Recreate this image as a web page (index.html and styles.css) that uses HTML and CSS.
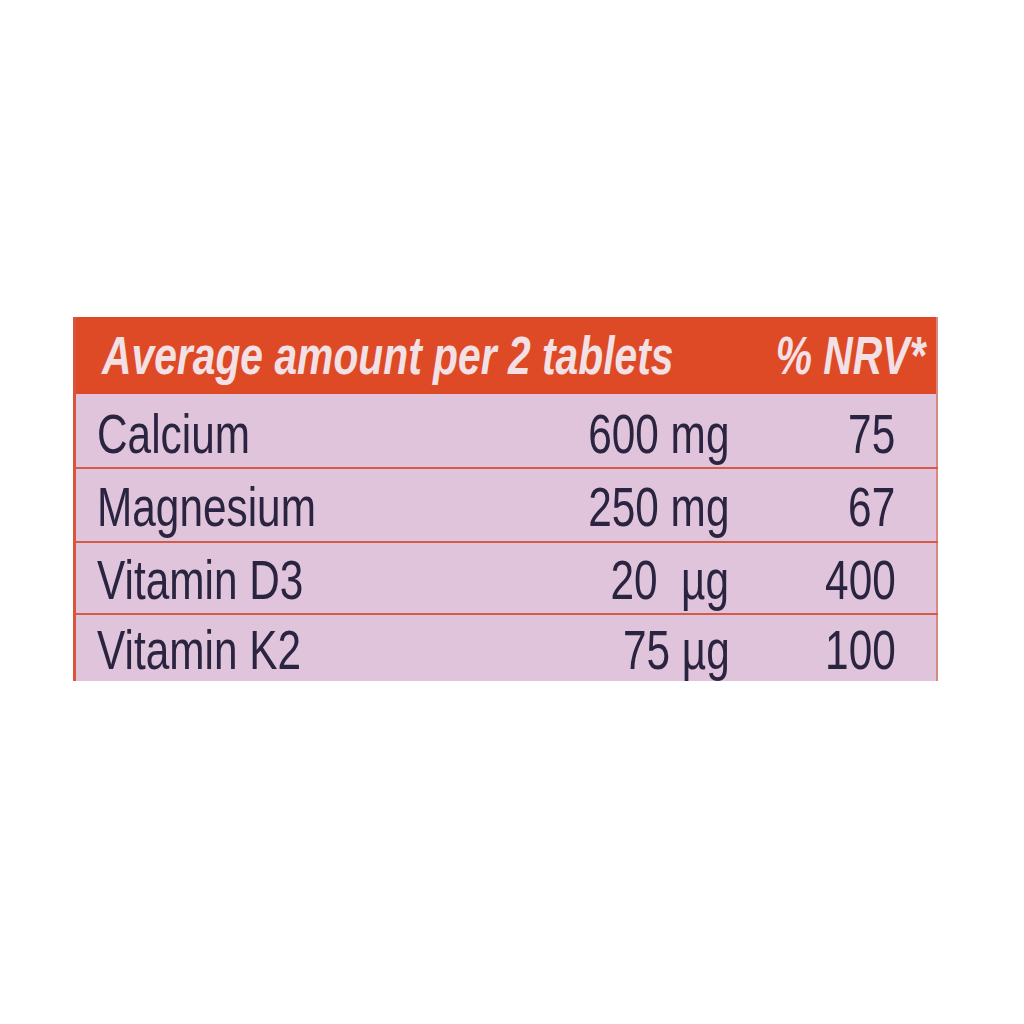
FILE: index.html
```html
<!DOCTYPE html>
<html>
<head>
    <title>Nutrition Information</title>
    <link rel="stylesheet" href="styles.css">
</head>
<body>
    <div class="label">
        <table class="nutri">
            <colgroup>
                <col class="c-name">
                <col class="c-amount">
                <col class="c-nrv">
            </colgroup>
            <thead>
                <tr>
                    <th class="name" colspan="2"><span class="sq">Average amount per 2 tablets</span></th>
                    <th class="nrv"><span class="sq">% NRV*</span></th>
                </tr>
            </thead>
            <tbody>
                <tr>
                    <td class="name"><span class="sq">Calcium</span></td>
                    <td class="amount"><span class="sq">600 mg</span></td>
                    <td class="nrv"><span class="sq">75</span></td>
                </tr>
                <tr>
                    <td class="name"><span class="sq">Magnesium</span></td>
                    <td class="amount"><span class="sq">250 mg</span></td>
                    <td class="nrv"><span class="sq">67</span></td>
                </tr>
                <tr>
                    <td class="name"><span class="sq">Vitamin D3</span></td>
                    <td class="amount"><span class="sq">20&nbsp;&nbsp;µg</span></td>
                    <td class="nrv"><span class="sq">400</span></td>
                </tr>
                <tr>
                    <td class="name"><span class="sq">Vitamin K2</span></td>
                    <td class="amount"><span class="sq">75 µg</span></td>
                    <td class="nrv"><span class="sq">100</span></td>
                </tr>
            </tbody>
        </table>
    </div>
</body>
</html>
```

FILE: styles.css
```css
body {
    margin: 0;
    background: #ffffff;
    font-family: "Liberation Sans", Arial, sans-serif;
}
.label {
    padding: 317px 0 0 73px;
}
.nutri {
    width: 864px;
    table-layout: fixed;
    border-collapse: collapse;
    background: #e0c4dc;
    color: #2a2440;
    border-left: 3px solid #d9533f;
    border-right: 2px solid #d98a80;
}
.c-name { width: 455px; }
.c-amount { width: 200px; }
.c-nrv { width: 207px; }

/* condensed type, the label face is a narrow grotesque */
.sq {
    display: inline-block;
    white-space: nowrap;
    transform: scaleX(0.77);
}
.name .sq { transform-origin: left center; }
.amount .sq,
.nrv .sq { transform-origin: right center; }

.nutri th {
    background: #de4a26;
    color: #f3e0e4;
    font-weight: bold;
    font-style: italic;
    font-size: 53px;
    height: 77px;
    padding: 0;
    line-height: 1;
    white-space: nowrap;
}
.nutri th.name {
    text-align: left;
    padding-left: 26px;
}
.nutri th.nrv {
    text-align: right;
    padding-right: 10px;
}
.nutri td {
    font-size: 55px;
    padding: 4px 0 0;
    line-height: 1;
    border-top: 2px solid #d65a48;
    white-space: nowrap;
}
.nutri tbody tr:nth-child(1) td {
    border-top: none;
    height: 65px;
    padding-top: 8px;
}
.nutri tbody tr:nth-child(2) td { height: 68px; }
.nutri tbody tr:nth-child(3) td { height: 66px; }
.nutri tbody tr:nth-child(4) td { height: 62px; }
.nutri td.name {
    text-align: left;
    padding-left: 21px;
}
.nutri td.amount {
    text-align: right;
}
.nutri td.nrv {
    text-align: right;
    padding-right: 40px;
}
```
